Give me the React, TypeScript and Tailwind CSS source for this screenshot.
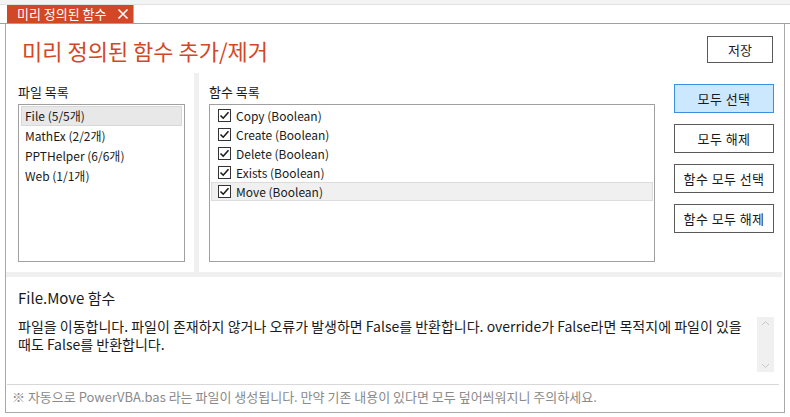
import React from "react";

const files = [
  { name: "File (5/5개)", selected: true },
  { name: "MathEx (2/2개)", selected: false },
  { name: "PPTHelper (6/6개)", selected: false },
  { name: "Web (1/1개)", selected: false },
];

const funcs = [
  { name: "Copy (Boolean)", selected: false },
  { name: "Create (Boolean)", selected: false },
  { name: "Delete (Boolean)", selected: false },
  { name: "Exists (Boolean)", selected: false },
  { name: "Move (Boolean)", selected: true },
];

const buttons = [
  { label: "모두 선택", active: true },
  { label: "모두 해제", active: false },
  { label: "함수 모두 선택", active: false },
  { label: "함수 모두 해제", active: false },
];

function CheckBox() {
  return (
    <div className="w-[13px] h-[13px] border border-[#333333] bg-white flex items-center justify-center shrink-0">
      <svg width="11" height="11" viewBox="0 0 11 11">
        <path d="M1.5 5.5 L4.2 8.2 L9.5 2.2" fill="none" stroke="#1a1a1a" strokeWidth="1.6" />
      </svg>
    </div>
  );
}

export default function App() {
  return (
    <div
      className="w-[790px] h-[417px] bg-white overflow-hidden text-[#1a1a1a] flex flex-col"
      style={{ fontFamily: '"Noto Sans CJK KR", "Noto Sans", sans-serif' }}
    >
      {/* tab strip */}
      <div className="h-[5px] bg-[#f3f3f3] border-b border-[#e2e2e2]" />
      <div className="h-[19px] flex border-b border-[#a0a0a0] bg-white">
        <div className="ml-[7px] w-[127px] bg-[#d24726] flex items-center pl-[10px] pr-[3px] text-white text-[13px] border-r border-[#b0b0b0]">
          <span>미리 정의된 함수</span>
          <svg className="ml-auto mr-[1px]" width="12" height="12" viewBox="0 0 12 12">
            <path d="M1.5 1.5 L10.5 10.5 M10.5 1.5 L1.5 10.5" stroke="white" strokeWidth="1.6" />
          </svg>
        </div>
      </div>

      {/* window */}
      <div className="mx-[5px] h-[389px] border-l border-r border-b border-[#a9a9a9] flex flex-col">
        {/* header */}
        <div className="h-[49px] flex items-start">
          <div className="pl-[16px] pt-[12px] text-[22px] leading-[28px] text-[#d24726]">
            미리 정의된 함수 추가/제거
          </div>
          <button className="ml-auto mr-[11px] mt-[12px] w-[66px] h-[27px] border border-[#5a5a5a] bg-white text-[13px]">
            저장
          </button>
        </div>

        {/* lists */}
        <div className="h-[199px] flex">
          <div className="w-[188px] flex flex-col pl-[12px] pr-[9px]">
            <div className="h-[31px] pt-[10px] text-[13px] leading-[18px]">파일 목록</div>
            <div className="h-[158px] border border-[#a0a0a0] px-[2px] py-[1px] flex flex-col">
              {files.map((f) => (
                <div
                  key={f.name}
                  className={
                    "h-[20px] flex items-center pl-[3px] text-[12px] " +
                    (f.selected ? "bg-[#e8e8e8] border border-[#d8d8d8]" : "border border-transparent")
                  }
                >
                  {f.name}
                </div>
              ))}
            </div>
          </div>

          <div className="w-[5px] bg-[#f0f0f0]" />

          <div className="flex-1 flex pl-[10px] pr-[10px]">
            <div className="w-[446px] flex flex-col">
              <div className="h-[31px] pt-[10px] text-[13px] leading-[18px]">함수 목록</div>
              <div className="h-[158px] border border-[#a0a0a0] px-[1px] py-[1px] flex flex-col">
                {funcs.map((f) => (
                  <div
                    key={f.name}
                    className={
                      "h-[19px] flex items-center pl-[6px] gap-[5px] text-[12px] " +
                      (f.selected ? "bg-[#f0f0f0] border border-[#dcdcdc]" : "border border-transparent")
                    }
                  >
                    <CheckBox />
                    <span>{f.name}</span>
                  </div>
                ))}
              </div>
            </div>
            <div className="ml-auto pt-[11px] flex flex-col gap-[11px]">
              {buttons.map((b) => (
                <button
                  key={b.label}
                  className={
                    "w-[100px] h-[29px] text-[13px] tracking-[0.4px] border " +
                    (b.active ? "bg-[#cce8ff] border-[#3d8ee0]" : "bg-white border-[#5a5a5a]")
                  }
                >
                  {b.label}
                </button>
              ))}
            </div>
          </div>
        </div>

        <div className="h-[5px] bg-[#f0f0f0] mr-[2px]" />

        {/* description */}
        <div className="flex-1 flex flex-col">
          <div className="pl-[12px] pt-[10px] h-[40px] text-[15px] leading-[22px]">File.Move 함수</div>
          <div className="flex h-[56px]">
            <div className="pl-[12px] text-[14px] leading-[18px] whitespace-nowrap">
              파일을 이동합니다. 파일이 존재하지 않거나 오류가 발생하면 False를 반환합니다. override가 False라면 목적지에 파일이 있을
              <br />
              때도 False를 반환합니다.
            </div>
            <div className="ml-auto mr-[10px] w-[17px] h-[55px] bg-[#f0f0f0] flex flex-col items-center justify-between py-[3px]">
              <svg width="9" height="6" viewBox="0 0 9 6">
                <path d="M1 5 L4.5 1.5 L8 5" fill="none" stroke="#c8c8c8" strokeWidth="1" />
              </svg>
              <svg width="9" height="6" viewBox="0 0 9 6">
                <path d="M1 1 L4.5 4.5 L8 1" fill="none" stroke="#c8c8c8" strokeWidth="1" />
              </svg>
            </div>
          </div>
          <div className="mt-[11px] ml-[1px] mr-[5px] border-t border-[#d8d8d8]" />
          <div className="pl-[6px] pt-[3px] text-[13px] leading-[18px] text-[#8a8a8a] whitespace-nowrap">
            ※ 자동으로 PowerVBA.bas 라는 파일이 생성됩니다. 만약 기존 내용이 있다면 모두 덮어씌워지니 주의하세요.
          </div>
        </div>
      </div>
    </div>
  );
}
